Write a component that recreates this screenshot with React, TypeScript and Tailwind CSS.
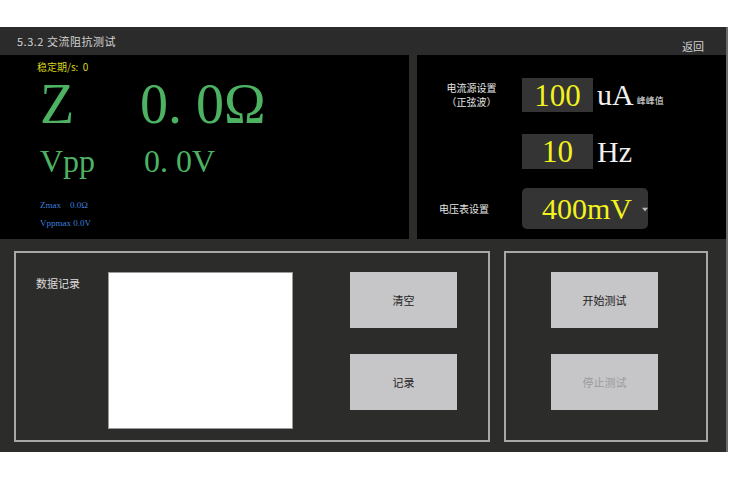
import React from "react";

// ── AC impedance test screen (5.3.2) ─────────────────────────────────────

const serif = "font-['Liberation_Serif','Noto_Sans_CJK_SC',serif]";
const cjk = "font-['Noto_Sans_CJK_SC','Noto_Sans',sans-serif]";

function GrayButton({ label, disabled }: { label: string; disabled?: boolean }) {
  return (
    <button
      type="button"
      className={`flex h-[56px] w-[107px] items-center justify-center bg-[#c6c5c7] text-[11px] ${cjk} ${
        disabled ? "text-[#9c9c9c]" : "text-[#1e1e1e]"
      }`}
    >
      {label}
    </button>
  );
}

function ValueBox({ value, h }: { value: string; h: string }) {
  return (
    <div
      className={`flex w-[71px] items-center justify-center bg-[#343434] ${h} ${serif} text-[31px] leading-none text-[#f2f21e]`}
    >
      {value}
    </div>
  );
}

export default function App() {
  return (
    <div className="h-[480px] w-[730px] bg-white pt-[27px]">
      <div className="flex h-[425px] w-[728px] flex-col border-r-2 border-[#6a6a6a] bg-[#2c2d2b]">
        {/* title bar */}
        <div className={`flex h-[28px] shrink-0 justify-between bg-[#2b2b2b] ${cjk}`}>
          <span className="self-center pl-[17px] text-[11px] tracking-[0.5px] text-[#d2d2d2]">
            5.3.2 交流阻抗测试
          </span>
          <span className="self-end pb-[1px] pr-[22px] text-[11px] text-[#d2d2d2]">返回</span>
        </div>

        {/* readout + settings */}
        <div className="flex h-[184px] shrink-0 gap-[8px]">
          <div className="flex w-[409px] flex-col bg-black">
            <div className={`h-[12px] pl-[37px] mt-[6px] text-[10px] leading-[12px] text-[#d6d61e] ${cjk}`}>
              稳定期/s: &nbsp;0
            </div>
            <div className={`mt-[3px] flex h-[56px] text-[56px] leading-none text-[#4db363] ${serif}`}>
              <span className="w-[140px] pl-[40px]">Z</span>
              <span className="whitespace-pre">0. 0Ω</span>
            </div>
            <div className={`mt-[13px] flex h-[32px] text-[32px] leading-none text-[#4db363] ${serif}`}>
              <span className="w-[144px] pl-[40px]">Vpp</span>
              <span className="whitespace-pre">0. 0V</span>
            </div>
            <div className={`mt-[19px] flex flex-col pl-[40px] text-[9px] leading-[18px] text-[#3b7fdc] ${serif}`}>
              <span className="whitespace-pre">Zmax    0.0Ω</span>
              <span className="whitespace-pre">Vppmax 0.0V</span>
            </div>
          </div>

          <div className="flex flex-1 flex-col bg-black pl-[22px] pt-[23px]">
            <div className="flex h-[34px] items-center">
              <div className={`w-[83px] pl-[4px] ${cjk}`}>
                <div className="flex w-[57px] flex-col items-center text-[10px] leading-[14px] text-[#e6e6e6]">
                  <span>电流源设置</span>
                  <span>（正弦波）</span>
                </div>
              </div>
              <ValueBox value="100" h="h-[34px]" />
              <span className={`ml-[4px] text-[30px] leading-none text-[#f0f0f0] ${serif}`}>uA</span>
              <span className={`ml-[3px] mt-[12px] text-[9px] text-[#e6e6e6] ${cjk}`}>峰峰值</span>
            </div>

            <div className="mt-[22px] flex h-[35px] items-center">
              <div className="w-[83px]" />
              <ValueBox value="10" h="h-[35px]" />
              <span className={`ml-[4px] text-[30px] leading-none text-[#f0f0f0] ${serif}`}>Hz</span>
            </div>

            <div className="mt-[19px] flex h-[41px] items-center">
              <div className={`w-[83px] text-[10px] text-[#e6e6e6] ${cjk}`}>电压表设置</div>
              <div className="flex h-[41px] w-[126px] items-center rounded-[5px] bg-[#343434] pl-[20px]">
                <span className={`text-[30px] leading-none text-[#f2f21e] ${serif}`}>400mV</span>
                <svg width="8" height="5" viewBox="0 0 8 5" className="ml-[10px] mt-[2px]">
                  <path d="M0 0 L8 0 L4 5 Z" fill="#b8b8b8" />
                </svg>
              </div>
            </div>
          </div>
        </div>

        {/* controls */}
        <div className="flex flex-1 gap-[14px] pb-[10px] pl-[14px] pt-[12px]">
          <div className="flex w-[476px] border-2 border-[#a8a8a8] pl-[20px] pt-[19px]">
            <div className={`w-[72px] pt-[3px] text-[11px] text-[#dcdcdc] ${cjk}`}>数据记录</div>
            <div className="h-[157px] w-[185px] border border-[#9a9a9a] bg-white" />
            <div className="ml-[57px] flex flex-col gap-[26px]">
              <GrayButton label="清空" />
              <GrayButton label="记录" />
            </div>
          </div>
          <div className="flex w-[204px] flex-col gap-[26px] border-2 border-[#a8a8a8] pl-[45px] pt-[19px]">
            <GrayButton label="开始测试" />
            <GrayButton label="停止测试" disabled />
          </div>
        </div>
      </div>
    </div>
  );
}
